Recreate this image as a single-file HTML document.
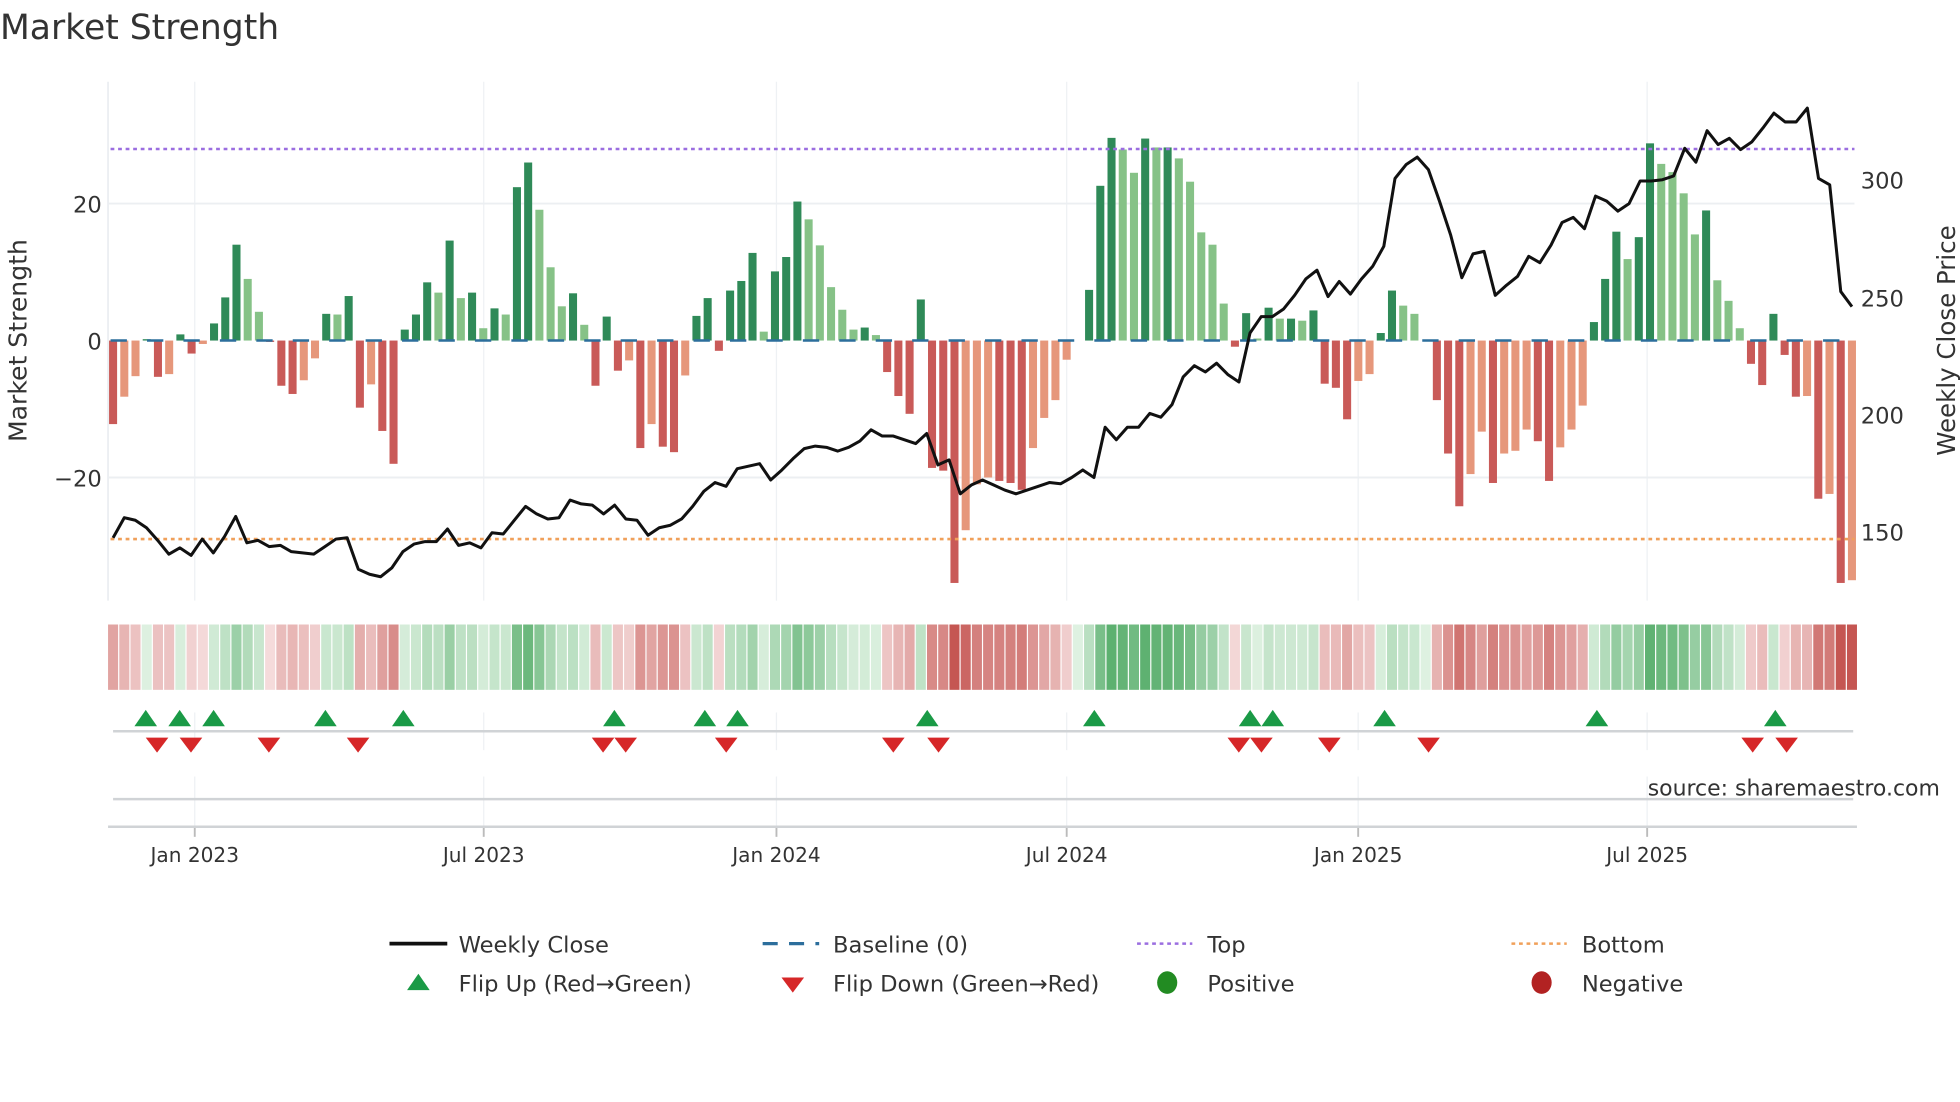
<!DOCTYPE html>
<html><head><meta charset="utf-8"><style>
html,body{margin:0;padding:0;background:#fff;width:1960px;height:1102px;overflow:hidden}
svg{display:block}
text{font-family:"DejaVu Sans","Liberation Sans",sans-serif;fill:#333}
</style></head><body>
<svg id="s" width="1960" height="1102" viewBox="0 0 1560 877" xmlns="http://www.w3.org/2000/svg">
<text x="0" y="31" font-size="27.5" fill="#333">Market Strength</text>
<g id="grid"></g>
<g id="bars"></g>
<line x1="88" y1="271" x2="1476" y2="271" stroke="#2c6e9c" stroke-width="2" stroke-dasharray="13 16"/>
<line x1="88" y1="118.5" x2="1476" y2="118.5" stroke="#9b6ee0" stroke-width="2" stroke-dasharray="3 3"/>
<line x1="88" y1="429" x2="1476" y2="429" stroke="#f0a05a" stroke-width="2" stroke-dasharray="3 3"/>
<polyline id="price" fill="none" stroke="#111" stroke-width="2.4" stroke-linejoin="round"/>
<g id="heat"></g>
<line x1="90" y1="582" x2="1475" y2="582" stroke="#d0d3d6" stroke-width="2"/>
<g id="flips"></g>
<line x1="90" y1="636" x2="1475" y2="636" stroke="#d0d3d6" stroke-width="2"/>
<line x1="86" y1="658" x2="1478" y2="658" stroke="#d0d3d6" stroke-width="2"/>
<text x="1544" y="633" font-size="17.5" fill="#999" text-anchor="end">source: sharemaestro.com</text>
<g font-size="16" text-anchor="middle">
<text x="155" y="686">Jan 2023</text><text x="385" y="686">Jul 2023</text><text x="618" y="686">Jan 2024</text>
<text x="849" y="686">Jul 2024</text><text x="1081" y="686">Jan 2025</text><text x="1311" y="686">Jul 2025</text>
</g>
<g font-size="18" text-anchor="end">
<text x="81" y="169">20</text><text x="81" y="278">0</text><text x="81" y="387">−20</text>
</g>
<g font-size="18">
<text x="1481" y="150">300</text><text x="1481" y="244">250</text><text x="1481" y="337">200</text><text x="1481" y="430">150</text>
</g>
<text transform="translate(21,271) rotate(-90)" font-size="20" text-anchor="middle">Market Strength</text>
<text transform="translate(1556,271) rotate(-90)" font-size="19.5" text-anchor="middle">Weekly Close Price</text>
<g font-size="18">
<line x1="310" y1="751" x2="356" y2="751" stroke="#111" stroke-width="3"/>
<text x="365" y="758">Weekly Close</text>
<line x1="607" y1="751" x2="652" y2="751" stroke="#2c6e9c" stroke-width="2.5" stroke-dasharray="12 9"/>
<text x="663" y="758">Baseline (0)</text>
<line x1="905" y1="751" x2="949" y2="751" stroke="#9b6ee0" stroke-width="2" stroke-dasharray="3 3"/>
<text x="961" y="758">Top</text>
<line x1="1203" y1="751" x2="1247" y2="751" stroke="#f0a05a" stroke-width="2" stroke-dasharray="3 3"/>
<text x="1259" y="758">Bottom</text>
<path d="M324,788 L333,775 L342,788 Z" fill="#1a9a46"/>
<text x="365" y="789">Flip Up (Red→Green)</text>
<path d="M622,778 L640,778 L631,790 Z" fill="#d62728"/>
<text x="663" y="789">Flip Down (Green→Red)</text>
<ellipse cx="929" cy="782" rx="8" ry="9" fill="#228b22"/>
<text x="961" y="789">Positive</text>
<ellipse cx="1227" cy="782" rx="8" ry="9" fill="#b22222"/>
<text x="1259" y="789">Negative</text>
</g>
</svg>
<script>
var NS="http://www.w3.org/2000/svg";
function el(p,t,a){var e=document.createElementNS(NS,t);for(var k in a)e.setAttribute(k,a[k]);p.appendChild(e);return e;}
var v=[-12.2,-8.2,-5.2,0.2,-5.3,-4.9,0.9,-1.9,-0.5,2.5,6.3,14,9,4.2,-0.2,-6.6,-7.8,-5.8,-2.6,3.9,3.8,6.5,-9.8,-6.4,-13.2,-18,1.6,3.8,8.5,7,14.6,6.2,7,1.8,4.7,3.8,22.4,26,19.1,10.7,5,6.9,2.3,-6.6,3.5,-4.4,-2.9,-15.7,-12.2,-15.5,-16.3,-5.1,3.6,6.2,-1.5,7.3,8.7,12.8,1.3,10.1,12.2,20.3,17.7,13.9,7.8,4.5,1.6,1.9,0.8,-4.6,-8.1,-10.7,6,-18.6,-19,-35.4,-27.7,-21,
-20,-20.5,-20.8,-21.8,-15.7,-11.3,-8.7,-2.8,0,7.4,22.6,29.6,27.9,24.5,29.5,28.2,28.2,26.6,23.2,15.8,14,5.4,-0.9,4,0.3,4.8,3.2,3.2,2.9,4.4,-6.3,-6.9,-11.5,-5.9,-4.9,1.1,7.3,5.1,3.9,0,-8.7,-16.5,-24.2,-19.5,-13.3,-20.8,-16.5,-16.1,-13,-14.7,-20.5,-15.6,-13,-9.5,2.7,9,15.9,11.9,15.1,28.8,25.8,24.6,21.5,15.5,19,8.8,5.8,1.8,-3.4,-6.5,3.9,-2.1,-8.2,-8.1,-23.1,-22.4,-35.4,-35];
var n=v.length,dx=(1474-90)/(n-1);
var g=document.getElementById('grid');
[155,385,618,849,1081,1311].forEach(function(x){
 el(g,'line',{x1:x,y1:65,x2:x,y2:478,stroke:'#eef1f4','stroke-width':1});
 el(g,'line',{x1:x,y1:567,x2:x,y2:597,stroke:'#eef1f4','stroke-width':1});
 el(g,'line',{x1:x,y1:618,x2:x,y2:658,stroke:'#eef1f4','stroke-width':1});
 el(g,'line',{x1:x,y1:658,x2:x,y2:666,stroke:'#bbb','stroke-width':1.5});
});
[162,380].forEach(function(y){el(g,'line',{x1:86,y1:y,x2:1476,y2:y,stroke:'#eceff2','stroke-width':1.5});});
el(g,'line',{x1:86,y1:65,x2:86,y2:478,stroke:'#eceff2','stroke-width':1.5});
var b=document.getElementById('bars'),h=document.getElementById('heat');
function mix(a,c,t){return 'rgb('+[0,1,2].map(function(i){return Math.round(a[i]+(c[i]-a[i])*t)}).join(',')+')';}
for(var i=0;i<n;i++){
 var x=90+dx*i,val=v[i],prev=i?v[i-1]:0,col;
 if(val>=0) col=(val>=prev)?'#2f8a58':'#86c287'; else col=(val<=prev)?'#c95a58':'#e6977b';
 var y=271-val*5.45;
 if(Math.abs(val)>0.05) el(b,'rect',{x:x-3.2,y:Math.min(y,271),width:6.4,height:Math.abs(y-271),fill:col});
 var t=Math.min(1,Math.pow(Math.abs(val)/32,0.9));
 var hc=val>=0?mix([222,241,225],[84,172,104],t):mix([245,220,220],[197,86,82],t);
 el(h,'rect',{x:x-4,y:497,width:8,height:52,fill:hc});
}
var P=[428,412,414,420,430,441,436,442,429,440,427,411,432,430,435,434,439,440,441,435,429,428,453,457,459,452,439,433,431,431,421,434,432,436,424,425,414,403,409,413,412,398,401,402,409,402,413,414,426,420,418,413,403,391,384,387,373,371,369,382,374,365,357,355,356,359,356,351,342,347,347,350,353,345,370,366,393,386,382,386,390,393,390,387,384,385,380,374,380,340,350,340,340,329,332,322,300,291,296,289,298,304,265,252,252,246,235,222,215,236,224,234,222,212,196,142,131,125,135,160,187,221,202,200,235,227,220,204,209,195,177,173,182,156,160,168,162,144,144,143,140,118,129,104,115,110,119,113,102,90,97,97,86,142,147,232,244];
var pts=[],m=P.length,pdx=(1474-90)/(m-1);
for(var j=0;j<m;j++)pts.push((90+pdx*j).toFixed(1)+','+P[j]);
document.getElementById('price').setAttribute('points',pts.join(' '));
var f=document.getElementById('flips');
[116,143,170,259,321,489,561,587,738,871,995,1013,1102,1271,1413].forEach(function(x){el(f,'path',{d:'M'+(x-9)+',578 L'+x+',565 L'+(x+9)+',578 Z',fill:'#1a9a46'});});
[125,152,214,285,480,498,578,711,747,986,1004,1058,1137,1395,1422].forEach(function(x){el(f,'path',{d:'M'+(x-9)+',587 L'+(x+9)+',587 L'+x+',599 Z',fill:'#d62728'});});
</script>
</body></html>
